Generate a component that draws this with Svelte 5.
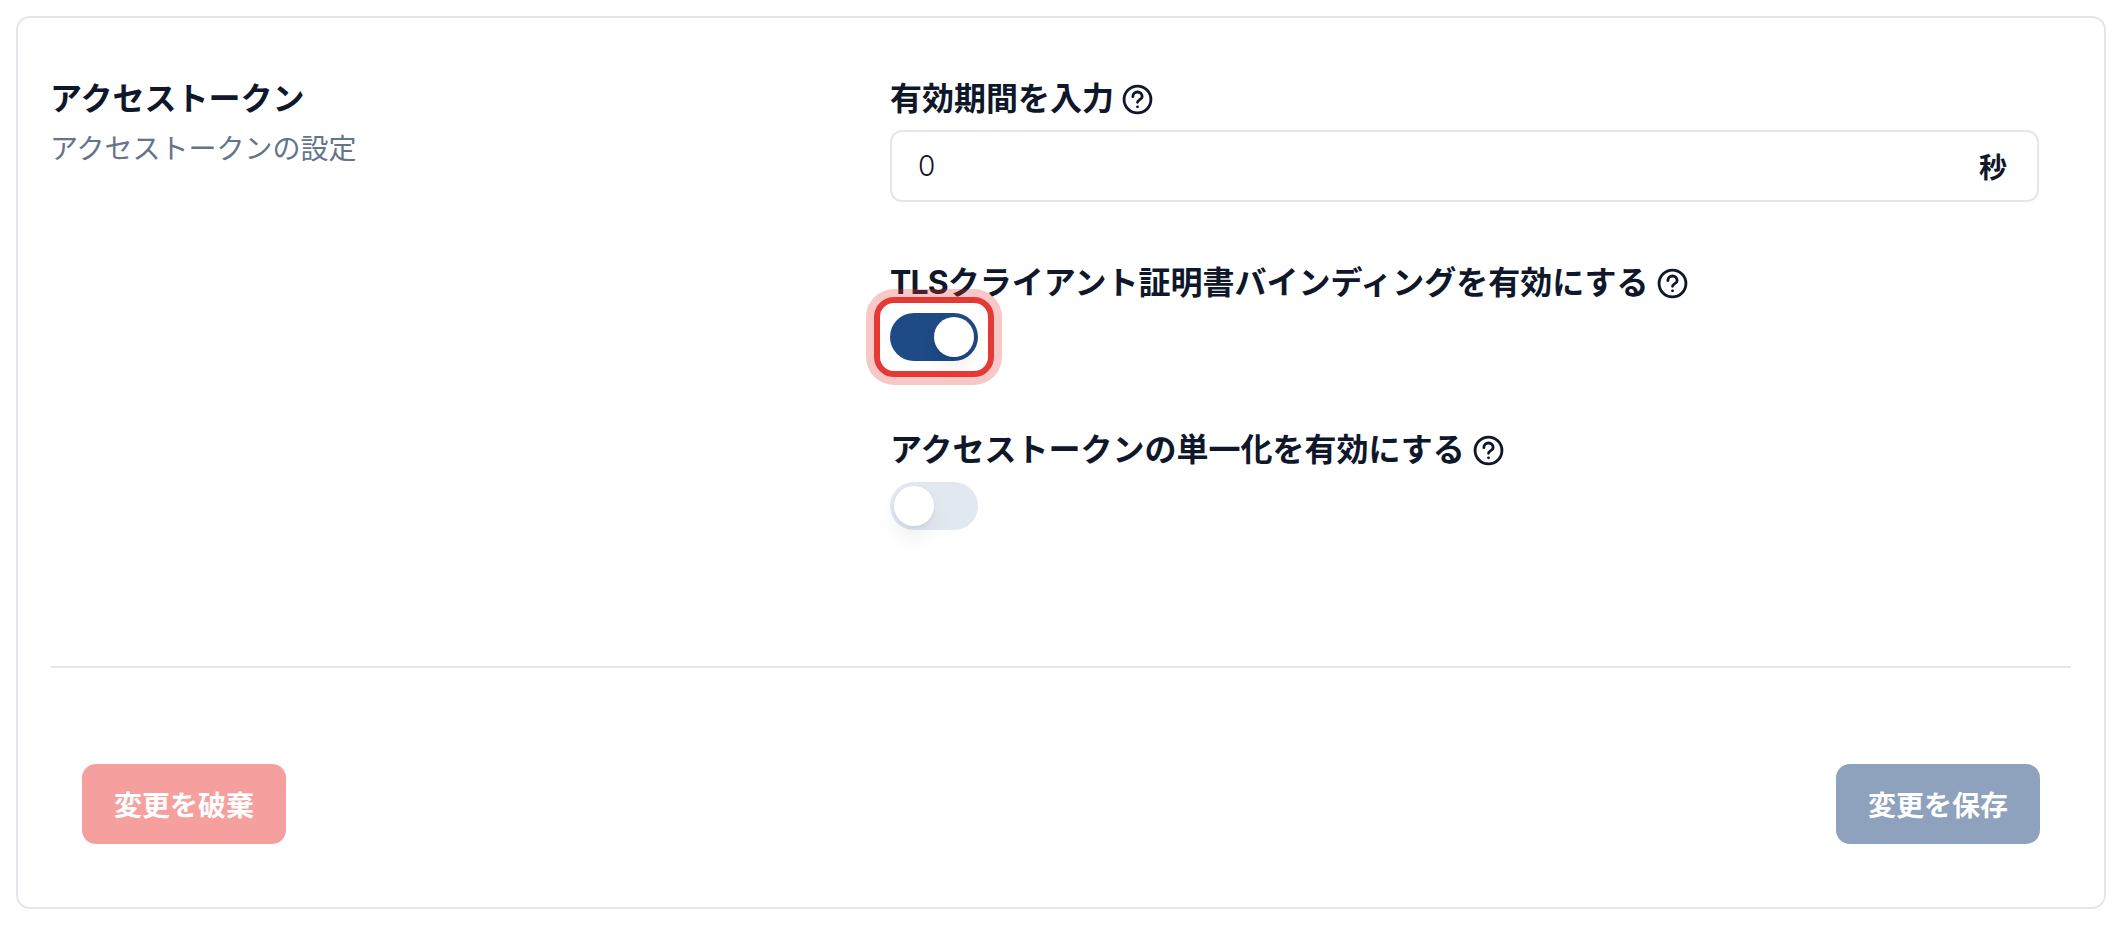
<script>
  let expiry = $state(0);
  let tlsBinding = $state(true);
  let singleToken = $state(false);
</script>

{#snippet helpIcon()}
  <svg class="help" viewBox="0 0 24 24" fill="none" stroke="currentColor" stroke-width="2.2" stroke-linecap="round" stroke-linejoin="round">
    <circle cx="12" cy="12" r="10.4" />
    <path d="M8.4 9.8a3.6 3.6 0 0 1 7.2 0c0 2.2-3.6 2.4-3.6 4.4" />
    <path d="M12 17.7h.01" />
  </svg>
{/snippet}

<div class="card">
  <div class="section">
    <div class="intro">
      <h2>アクセストークン</h2>
      <p>アクセストークンの設定</p>
    </div>

    <div class="fields">
      <div class="field">
        <div class="label">有効期間を入力 {@render helpIcon()}</div>
        <div class="input">
          <input type="text" bind:value={expiry} />
          <span class="suffix">秒</span>
        </div>
      </div>

      <div class="field">
        <div class="label">
          <span><span class="latin">TLS</span>クライアント証明書バインディングを有効にする</span>
          {@render helpIcon()}
        </div>
        <button class="toggle highlighted" class:on={tlsBinding} aria-label="TLS" onclick={() => (tlsBinding = !tlsBinding)}>
          <span class="knob"></span>
        </button>
      </div>

      <div class="field">
        <div class="label">アクセストークンの単一化を有効にする {@render helpIcon()}</div>
        <button class="toggle" class:on={singleToken} aria-label="single" onclick={() => (singleToken = !singleToken)}>
          <span class="knob"></span>
        </button>
      </div>
    </div>
  </div>

  <div class="actions">
    <button class="btn discard">変更を破棄</button>
    <button class="btn save">変更を保存</button>
  </div>
</div>

<style>
  :global(body) {
    margin: 0;
    background: #fff;
    font-family: Inter, 'Noto Sans CJK JP', sans-serif;
    color: #0f172a;
  }

  .card {
    margin: 16px;
    height: 893px;
    box-sizing: border-box;
    border: 2px solid #e3e7ed;
    border-radius: 14px;
    padding: 61px 33px 62px;
    display: flex;
    flex-direction: column;
  }

  .section {
    display: grid;
    grid-template-columns: 839px 1fr;
    height: 587px;
    border-bottom: 2px solid #e3e7ed;
  }

  .intro {
    margin-left: -1px;
  }

  h2 {
    margin: 0;
    font-size: 32px;
    line-height: 40px;
    font-weight: 700;
  }

  .intro p {
    margin: 12px 0 0;
    font-size: 28px;
    line-height: 36px;
    color: #64748b;
  }

  .fields {
    display: flex;
    flex-direction: column;
    gap: 61px;
    padding-right: 32px;
  }

  .field {
    display: flex;
    flex-direction: column;
    align-items: flex-start;
    gap: 12px;
  }

  .label {
    display: flex;
    align-items: center;
    gap: 8px;
    font-size: 32px;
    line-height: 40px;
    font-weight: 700;
    white-space: nowrap;
  }

  .latin {
    letter-spacing: -0.9px;
  }

  .help {
    width: 31px;
    height: 31px;
    flex: none;
  }

  .input {
    align-self: stretch;
    margin-top: -1px;
    height: 72px;
    box-sizing: border-box;
    border: 2px solid #e3e7ed;
    border-radius: 12px;
    padding: 0 30px 0 26px;
    display: flex;
    align-items: center;
  }

  .input input {
    flex: 1;
    min-width: 0;
    border: 0;
    outline: 0;
    padding: 0;
    background: none;
    font: inherit;
    font-size: 28px;
    font-weight: 300;
    color: #0f172a;
  }

  .suffix {
    font-size: 28px;
    font-weight: 700;
  }

  .toggle {
    position: relative;
    width: 88px;
    height: 48px;
    margin-bottom: 8px;
    padding: 4px;
    border: 0;
    border-radius: 24px;
    background: #e2e8f0;
    display: flex;
    cursor: pointer;
  }

  .toggle.on {
    margin-top: -2px;
    background: #1e4a86;
    justify-content: flex-end;
  }

  .knob {
    width: 40px;
    height: 40px;
    border-radius: 50%;
    background: #fff;
    box-shadow: 0 14px 22px -3px rgba(15, 23, 42, 0.08), 0 2px 4px rgba(15, 23, 42, 0.05);
  }

  .highlighted::after {
    content: '';
    position: absolute;
    inset: -16px;
    border: 6px solid #e53935;
    border-radius: 20px;
    box-shadow: 0 0 0 8px rgba(229, 57, 53, 0.28);
  }

  .actions {
    display: flex;
    justify-content: space-between;
    padding: 96px 31px 0;
  }

  .btn {
    width: 204px;
    height: 80px;
    border: 0;
    border-radius: 14px;
    font-family: inherit;
    font-size: 28px;
    font-weight: 700;
    color: #fff;
  }

  .discard {
    background: #f59f9f;
  }

  .save {
    background: #8ea2bd;
  }
</style>
